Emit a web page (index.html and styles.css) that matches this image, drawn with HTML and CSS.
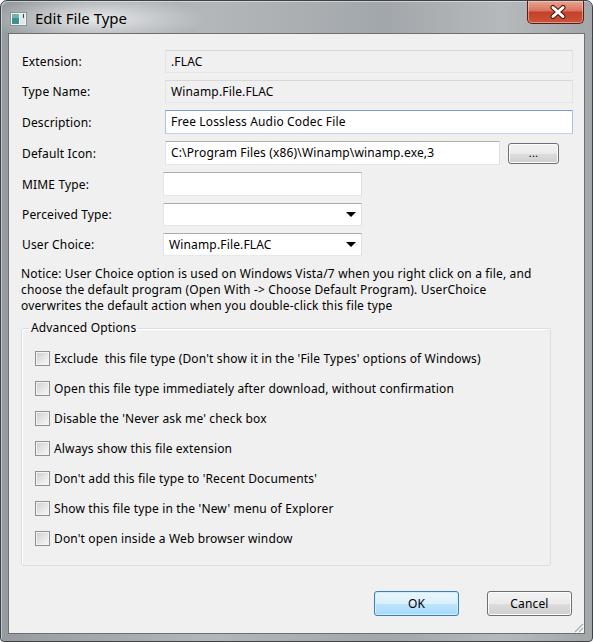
FILE: index.html
```html
<!DOCTYPE html>
<html lang="en">
<head>
    <meta charset="UTF-8">
    <title>Edit File Type</title>
    <link rel="stylesheet" href="styles.css">
</head>
<body>

    <div class="window">
        <div class="titlebar">
            <svg class="app-icon" width="17" height="14" viewBox="0 0 17 14">
                <rect x="0.5" y="0.5" width="16" height="13" fill="#f4f6f6" stroke="#8a9497"/>
                <rect x="2" y="2" width="7" height="10" fill="#3f8f8c"/>
                <rect x="2" y="2" width="7" height="4" fill="#6fb3ae"/>
                <rect x="10" y="2" width="5" height="10" fill="#dfe6e8"/>
                <rect x="13" y="2" width="1" height="4" fill="#31464c"/>
            </svg>
            <span class="title">Edit File Type</span>
            <button class="close-btn">
                <svg width="16" height="14" viewBox="0 0 16 14">
                    <path d="M3 2.5 L13 11.5 M13 2.5 L3 11.5" stroke="#4b150c" stroke-width="5" stroke-linecap="round"/>
                    <path d="M3 2.5 L13 11.5 M13 2.5 L3 11.5" stroke="#ffffff" stroke-width="3" stroke-linecap="round"/>
                </svg>
            </button>
        </div>

        <div class="client">
            <div class="form">
                <div class="row">
                    <label>Extension:</label>
                    <div class="field readonly wide">.FLAC</div>
                </div>
                <div class="row">
                    <label>Type Name:</label>
                    <div class="field readonly wide">Winamp.File.FLAC</div>
                </div>
                <div class="row">
                    <label>Description:</label>
                    <div class="field focused wide tall">Free Lossless Audio Codec File</div>
                </div>
                <div class="row">
                    <label>Default Icon:</label>
                    <div class="field icon-path tall">C:\Program Files (x86)\Winamp\winamp.exe,3</div>
                    <button class="btn browse-btn">...</button>
                </div>
                <div class="row">
                    <label>MIME Type:</label>
                    <div class="field short tall"></div>
                </div>
                <div class="row">
                    <label>Perceived Type:</label>
                    <div class="field short combo"><span></span><i class="arrow"></i></div>
                </div>
                <div class="row">
                    <label>User Choice:</label>
                    <div class="field short combo"><span>Winamp.File.FLAC</span><i class="arrow"></i></div>
                </div>
            </div>

            <p class="notice">
                Notice: User Choice option is used on Windows Vista/7 when you right click on a file, and<br>
                choose the default program (Open With -&gt; Choose Default Program). UserChoice<br>
                overwrites the default action when you double-click this file type
            </p>

            <fieldset class="options">
                <legend>Advanced Options</legend>
                <div class="option-list">
                    <label class="check-row"><span class="check"></span>Exclude&nbsp; this file type (Don't show it in the 'File Types' options of Windows)</label>
                    <label class="check-row"><span class="check"></span>Open this file type immediately after download, without confirmation</label>
                    <label class="check-row"><span class="check"></span>Disable the 'Never ask me' check box</label>
                    <label class="check-row"><span class="check"></span>Always show this file extension</label>
                    <label class="check-row"><span class="check"></span>Don't add this file type to 'Recent Documents'</label>
                    <label class="check-row"><span class="check"></span>Show this file type in the 'New' menu of Explorer</label>
                    <label class="check-row"><span class="check"></span>Don't open inside a Web browser window</label>
                </div>
            </fieldset>

            <div class="actions">
                <button class="btn btn-default">OK</button>
                <button class="btn">Cancel</button>
            </div>

            <svg class="grip" width="12" height="12" viewBox="0 0 12 12">
                <path d="M11 3 L3 11 M11 7 L7 11" stroke="#a9adb0" stroke-width="1.2"/>
                <path d="M12 4 L4 12 M12 8 L8 12" stroke="#ffffff" stroke-width="1"/>
            </svg>
        </div>
    </div>

</body>
</html>
```

FILE: styles.css
```css
/* General */
* {
    margin: 0;
    padding: 0;
    box-sizing: border-box;
    font-family: "Noto Sans", "Open Sans", sans-serif;
}

body {
    background: #ffffff;
}

/* Window frame */
.window {
    width: 593px;
    height: 642px;
    display: flex;
    flex-direction: column;
    border: 1px solid #3e4245;
    border-radius: 7px 7px 4px 4px;
    overflow: hidden;
    background:
        radial-gradient(ellipse 110px 24px at 95px 18px, rgba(255, 255, 255, 0.75), rgba(255, 255, 255, 0)),
        linear-gradient(to right, #959ba0 0%, #b3b7ba 35%, #a2a7ab 65%, #b6b9bc 85%, #a3a7aa 100%);
    box-shadow: inset 1px 1px 0 rgba(255, 255, 255, 0.45);
}

.titlebar {
    height: 32px;
    display: flex;
    align-items: flex-start;
    padding-left: 9px;
}

.app-icon {
    margin-top: 11px;
}

.title {
    margin-left: 8px;
    margin-top: 6px;
    font-size: 15px;
    line-height: 22px;
    color: #000;
}

.close-btn {
    margin-left: auto;
    margin-right: 8px;
    width: 57px;
    height: 23px;
    display: flex;
    align-items: center;
    justify-content: center;
    border: 1px solid #5a1d12;
    border-top: none;
    border-radius: 0 0 5px 5px;
    background: linear-gradient(#e8a493 0%, #d9735d 45%, #c44128 50%, #c8543a 100%);
    box-shadow: inset 0 0 0 1px rgba(255, 220, 210, 0.5);
    padding-left: 4px;
}

/* Client area */
.client {
    flex: 1;
    position: relative;
    margin: 0 7px 7px;
    border: 1px solid #6a7074;
    background: #f0f0f0;
    display: flex;
    flex-direction: column;
    padding: 16px 11px 0 12px;
    font-size: 12px;
    letter-spacing: 0.15px;
    color: #000;
}

.form {
    display: flex;
    flex-direction: column;
    gap: 7px;
}

.row {
    display: flex;
    align-items: center;
}

.row label {
    width: 142px;
    padding-left: 1px;
}

.field {
    height: 23px;
    line-height: 21px;
    padding: 0 5px;
    border: 1px solid #abadb3;
    border-color: #abadb3 #dbdfe6 #e3e9ef #e2e3ea;
    background: #ffffff;
    white-space: nowrap;
    overflow: hidden;
}

.field.tall {
    height: 24px;
    line-height: 22px;
}

.field.readonly {
    background: #f0f0f0;
    border-color: #d7d7d7 #e3e3e3 #e6e6e6 #e3e3e3;
}

.field.focused {
    border-color: #7da2ce #a4c3e6 #b7d5f2 #a4c3e6;
}

.field.wide {
    flex: 1;
    margin-left: 2px;
}

.field.icon-path {
    width: 335px;
    margin-left: 2px;
}

.field.short {
    width: 199px;
}

.combo {
    display: flex;
    align-items: center;
}

.arrow {
    margin-left: auto;
    width: 0;
    height: 0;
    border-left: 5px solid transparent;
    border-right: 5px solid transparent;
    border-top: 5px solid #000;
}

/* Buttons */
.btn {
    width: 85px;
    height: 25px;
    font-size: 12px;
    letter-spacing: 0.15px;
    color: #000;
    border: 1px solid #707070;
    border-radius: 3px;
    background: linear-gradient(#f2f2f2 0%, #ebebeb 50%, #dddddd 51%, #cfcfcf 100%);
    box-shadow: inset 0 0 0 1px #fbfbfb;
}

.browse-btn {
    width: 51px;
    height: 21px;
    margin-left: 8px;
    line-height: 14px;
    font-size: 11px;
}

.btn-default {
    border-color: #3c7fb1;
    background: linear-gradient(#eaf6fd 0%, #d9f0fc 50%, #bee6fd 51%, #a7d9f5 100%);
    box-shadow: inset 0 0 0 1px #cfeefd;
}

/* Notice text */
.notice {
    margin-top: 10px;
    line-height: 16px;
}

/* Advanced options group */
.options {
    margin: 6px 22px 0 0;
    border: 1px solid #d5dfe5;
    border-radius: 3px;
    padding: 14px 0 19px 0;
    box-shadow: inset 1px 1px 0 #ffffff;
}

.options legend {
    margin-left: 7px;
    padding: 0 2px;
    line-height: 16px;
}

.option-list {
    display: flex;
    flex-direction: column;
    gap: 14px;
    padding-left: 13px;
}

.check-row {
    display: flex;
    align-items: center;
    gap: 4px;
    height: 16px;
    white-space: nowrap;
}

.check {
    width: 15px;
    height: 15px;
    border: 1px solid #8e8f8f;
    background: linear-gradient(135deg, #cbcdd0 0%, #e8e9ea 60%, #f8f8f8 100%);
    box-shadow: inset 0 0 0 1px #f4f4f4;
}

.actions {
    margin-top: 25px;
    padding-right: 1px;
    display: flex;
    justify-content: flex-end;
    gap: 28px;
}

.grip {
    position: absolute;
    right: 0;
    bottom: 0;
}
```
